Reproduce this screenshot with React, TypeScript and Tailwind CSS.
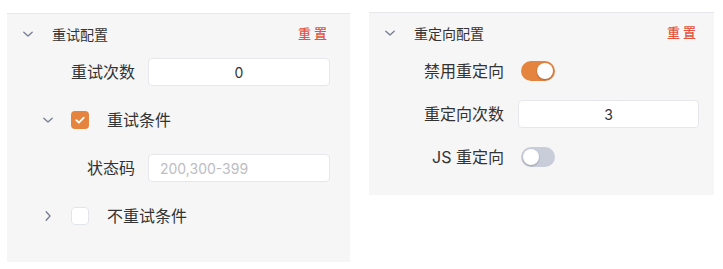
import React, { useState } from "react";

const FONT = { fontFamily: '"Inter", "Noto Sans CJK SC", sans-serif' };

function Chevron({ open }: { open: boolean }) {
  return (
    <svg
      width="12"
      height="12"
      viewBox="0 0 12 12"
      className={`text-[#7b8096] ${open ? "" : "-rotate-90"}`}
    >
      <path d="M1.8 4.2 L6 8 L10.2 4.2" fill="none" stroke="currentColor" strokeWidth="1.4" strokeLinecap="round" strokeLinejoin="round" />
    </svg>
  );
}

function Checkbox({ checked }: { checked: boolean }) {
  return checked ? (
    <span className="flex h-[18px] w-[18px] items-center justify-center rounded-[4px] bg-[#e5843f]">
      <svg width="12" height="12" viewBox="0 0 12 12">
        <path d="M2.3 6.2 L4.9 8.7 L9.8 3.6" fill="none" stroke="white" strokeWidth="1.8" strokeLinecap="round" strokeLinejoin="round" />
      </svg>
    </span>
  ) : (
    <span className="block h-[18px] w-[18px] rounded-[4px] border border-[#e3e4ea] bg-white" />
  );
}

function Toggle({ on }: { on: boolean }) {
  return (
    <span
      className={`flex h-[20px] w-[34px] items-center rounded-full px-[2px] ${
        on ? "justify-end bg-[#e5843f]" : "justify-start bg-[#c9cdd9]"
      }`}
    >
      <span className="h-[16px] w-[16px] rounded-full bg-white shadow-[0_1px_2px_rgba(0,0,0,0.25)]" />
    </span>
  );
}

function Header({ title }: { title: string }) {
  return (
    <div className="flex h-[40px] items-center">
      <span className="ml-[15px] flex w-[12px] justify-center">
        <Chevron open />
      </span>
      <span className="ml-[18px] text-[14px] text-[#333]">{title}</span>
      <span className="ml-auto text-[13px] font-medium tracking-[3px] text-[#e5533d]">重置</span>
    </div>
  );
}

export default function App() {
  const [retries] = useState("0");
  return (
    <div className="flex bg-white pl-[7px] pt-[12px] text-[#333]" style={FONT}>
      {/* retry panel */}
      <div className="mt-[1px] w-[343px] border-t border-[#e6e6ec] bg-[#f6f6f6] pb-[32px] pr-[20px]">
        <Header title="重试配置" />
        <div className="mt-[4px] flex h-[28px] items-center">
          <span className="w-[128px] text-right text-[16px]">重试次数</span>
          <div className="ml-[13px] flex h-[28px] flex-1 items-center justify-center rounded-[4px] border border-[#e6e7ec] bg-white text-[14px]">
            {retries}
          </div>
        </div>
        <div className="mt-[20px] flex h-[28px] items-center">
          <span className="ml-[35px] flex w-[12px] justify-center">
            <Chevron open />
          </span>
          <span className="ml-[17px]">
            <Checkbox checked />
          </span>
          <span className="ml-[18px] text-[16px]">重试条件</span>
        </div>
        <div className="mt-[20px] flex h-[28px] items-center">
          <span className="w-[128px] text-right text-[16px]">状态码</span>
          <div className="ml-[13px] flex h-[28px] flex-1 items-center rounded-[4px] border border-[#e6e7ec] bg-white pl-[11px] text-[14px] text-[#bdbdc2]">
            200,300-399
          </div>
        </div>
        <div className="mt-[20px] flex h-[28px] items-center">
          <span className="ml-[35px] flex w-[12px] justify-center">
            <Chevron open={false} />
          </span>
          <span className="ml-[17px]">
            <Checkbox checked={false} />
          </span>
          <span className="ml-[18px] text-[16px]">不重试条件</span>
        </div>
      </div>

      {/* redirect panel */}
      <div className="ml-[19px] w-[345px] self-start border-t border-[#e6e6ec] bg-[#f6f6f6] pb-[24px] pr-[15px]">
        <Header title="重定向配置" />
        <div className="mt-[4px] flex h-[28px] items-center">
          <span className="w-[135px] text-right text-[16px]">禁用重定向</span>
          <span className="ml-[17px]">
            <Toggle on />
          </span>
        </div>
        <div className="mt-[15px] flex h-[28px] items-center">
          <span className="w-[135px] text-right text-[16px]">重定向次数</span>
          <div className="ml-[14px] flex h-[28px] flex-1 items-center justify-center rounded-[4px] border border-[#e6e7ec] bg-white text-[14px]">
            3
          </div>
        </div>
        <div className="mt-[15px] flex h-[28px] items-center">
          <span className="w-[135px] text-right text-[16px]">JS 重定向</span>
          <span className="ml-[17px]">
            <Toggle on={false} />
          </span>
        </div>
      </div>
    </div>
  );
}
